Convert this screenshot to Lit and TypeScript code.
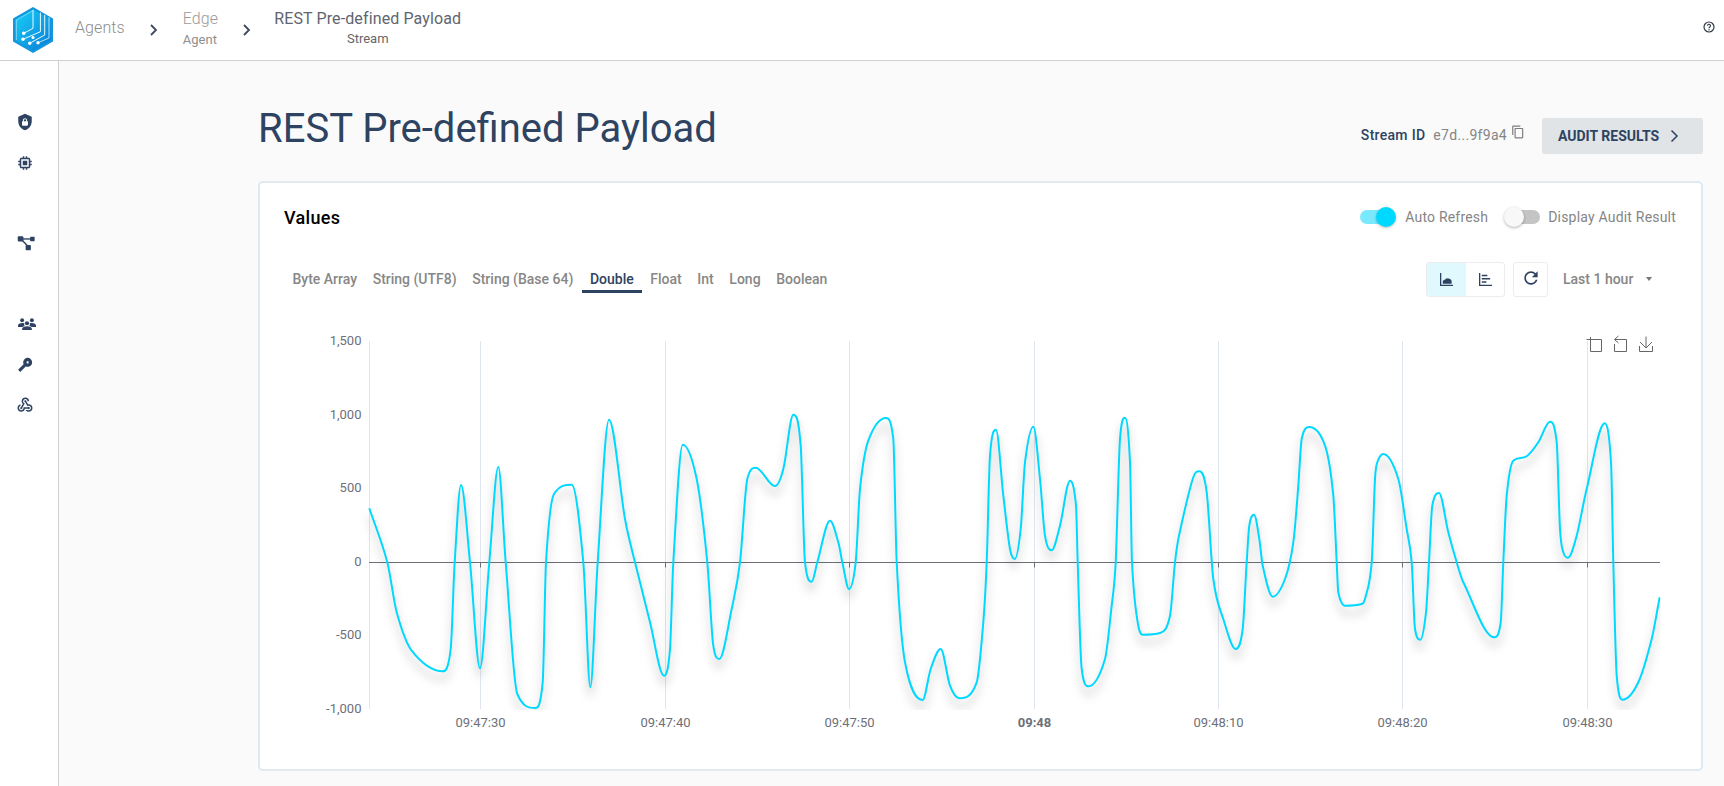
import { LitElement, html, css, svg } from "lit";
import { customElement } from "lit/decorators.js";

type P = [number, number];
const conv = (ox: number, arr: number[][]): P[] => arr.map(([x, y]) => [ox + x / 3, 330 + y / 3] as P);

const POINTS: P[] = [
  ...conv(300, [[208,538],[262,700],[290,850],[335,965],[428,1027],[452,960],[464,700],[483,468],[510,700],[540,1018],[568,700],[595,414],[617,700],[652,1095],[706,1137],[728,1060],[738,700],[762,495],[815,467],[850,700],[871,1074],[893,700],[927,272],[975,570],[1005,700],[1050,880],[1092,1040],[1110,960],[1120,700],[1148,347],[1190,450],[1222,700],[1240,950],[1258,990],[1295,840],[1320,700],[1342,450],[1367,416],[1425,471],[1450,420]]),
  ...conv(780, [[40,257],[62,350],[75,700],[95,758],[112,700],[150,575],[175,640],[187,700],[207,780],[227,700],[240,480],[265,335],[318,267],[340,330],[350,700],[375,1000],[428,1113],[452,1020],[482,960],[510,1070],[538,1108],[590,1060],[610,880],[620,700],[630,380],[648,302],[670,500],[690,660],[704,690],[722,600],[735,400],[760,293],[780,450],[795,620],[815,664],[840,590],[870,455],[888,530],[893,700],[905,1020],[925,1072],[975,990],[995,830],[1007,700],[1020,330],[1035,266],[1050,400],[1056,700],[1075,890],[1090,917],[1140,912],[1170,860],[1185,700],[1197,620],[1240,445],[1258,427],[1280,490],[1300,750],[1330,870],[1367,960],[1388,900]]),
  ...conv(1230, [[50,700],[58,590],[72,557],[88,630],[98,710],[128,803],[165,750],[190,640],[205,470],[215,330],[238,294],[285,350],[310,500],[320,700],[325,790],[345,830],[395,825],[405,810],[425,700],[435,450],[442,400],[460,375],[505,450],[530,600],[545,700],[555,900],[571,932],[588,850],[597,700],[607,530],[627,492],[655,610],[680,700],[700,760],[793,925],[812,880],[820,700],[830,500],[850,395],[890,382],[925,340],[960,278],[980,340],[990,600],[1000,670],[1014,686],[1040,620],[1070,480],[1124,283],[1143,400],[1150,700],[1160,1040],[1178,1112],[1225,1060],[1265,930],[1289,805]]),
];

function smoothPath(pts: P[]): string {
  const n = pts.length;
  const s: number[] = [];
  for (let i = 0; i < n - 1; i++) s.push((pts[i + 1][1] - pts[i][1]) / (pts[i + 1][0] - pts[i][0]));
  const m: number[] = new Array(n).fill(0);
  m[0] = s[0];
  m[n - 1] = s[n - 2];
  for (let i = 1; i < n - 1; i++) {
    if (s[i - 1] * s[i] <= 0) continue;
    const c = (pts[i + 1][1] - pts[i - 1][1]) / (pts[i + 1][0] - pts[i - 1][0]);
    const lim = 3 * Math.min(Math.abs(s[i - 1]), Math.abs(s[i]));
    m[i] = Math.sign(c) * Math.min(Math.abs(c), lim);
  }
  let d = `M${pts[0][0].toFixed(1)} ${pts[0][1].toFixed(1)}`;
  for (let i = 0; i < n - 1; i++) {
    const h = (pts[i + 1][0] - pts[i][0]) / 3;
    d += `C${(pts[i][0] + h).toFixed(1)} ${(pts[i][1] + m[i] * h).toFixed(1)} ${(pts[i + 1][0] - h).toFixed(1)} ${(pts[i + 1][1] - m[i + 1] * h).toFixed(1)} ${pts[i + 1][0].toFixed(1)} ${pts[i + 1][1].toFixed(1)}`;
  }
  return d;
}

const TABS = ["Byte Array", "String (UTF8)", "String (Base 64)", "Double", "Float", "Int", "Long", "Boolean"];
const GRID: [number, string, boolean][] = [
  [480.5, "09:47:30", false], [665.5, "09:47:40", false], [849.5, "09:47:50", false], [1034.5, "09:48", true],
  [1218.5, "09:48:10", false], [1402.5, "09:48:20", false], [1587.5, "09:48:30", false],
];
const YL: [number, string][] = [[341, "1,500"], [414.5, "1,000"], [488, "500"], [561.5, "0"], [635, "-500"], [708.5, "-1,000"]];

@customElement("app-root")
export class AppRoot extends LitElement {
  static styles = css`
    :host { display: block; height: 786px; overflow: hidden; font-family: Roboto, "Liberation Sans", sans-serif; background: #fafafa; color: #2e4361; }
    .top { height: 60px; background: #fff; border-bottom: 1px solid #cfcfcf; display: flex; align-items: center; padding: 0 8px 0 13px; }
    .logo { width: 40px; height: 46px; flex: none; margin-right: 22px; }
    .crumb { font-size: 16px; color: #8d8d8d; font-weight: 300; display: flex; flex-direction: column; align-items: center; line-height: 20px; letter-spacing: .1px; margin-top: -4px; }
    .crumb small { font-size: 13px; line-height: 18px; margin-top: 2px; font-weight: 400; color: #8f8f8f; letter-spacing: 0; }
    .crumb.left { align-items: flex-start; color: #9a9a9a; margin-top: -3px; }
    .crumb.cur { color: #5f6670; font-weight: 400; letter-spacing: .12px; margin-top: -4px; }
    .crumb.cur small { color: #666; margin-top: 1px; }
    .sep { width: 10px; height: 14px; margin: 0 24px 0 24px; flex: none; }
    .sep.b { margin: 0 22px 0 24px; }
    .help { margin-left: auto; width: 12px; height: 12px; margin-right: 1px; margin-top: -6px; }
    .body { display: flex; height: 725px; }
    .side { width: 58px; flex: none; background: #fff; border-right: 1px solid #cfcfcf; display: grid; grid-auto-rows: 40.4px; padding: 41px 0 0 16px; box-sizing: border-box; width: 59px; justify-items: start; align-items: center; align-content: start; }
    .side svg { width: 18px; height: 18px; fill: #2e4361; }
    .side svg.mg { margin-left: 1px; }
    .side svg.grpi { margin-left: 2px; }
    main { flex: 1; padding: 0 21px 0 199px; min-width: 0; }
    .head { height: 120px; display: flex; align-items: center; padding-top: 22px; box-sizing: border-box; }
    h1 { margin: 0; font-size: 40px; font-weight: 400; color: #2e4361; flex: 1; position: relative; top: -4px; }
    .sid { font-size: 14px; font-weight: 500; color: #2e4361; margin-right: 8px; position: relative; top: 3px; letter-spacing: .3px; }
    .val { font-size: 14px; color: #858585; position: relative; top: 3px; letter-spacing: .3px; }
    .copy { width: 14px; height: 14px; fill: #7d7d7d; margin: 0 17px 0 4px; }
    .audit { width: 161px; height: 36px; background: #e0e4e7; border-radius: 3px; display: flex; align-items: center; padding-left: 16px; box-sizing: border-box; gap: 11px; font-size: 14px; font-weight: 700; color: #2e4361; position: relative; top: 4px; }
    .audit svg { width: 9px; height: 14px; }
    .card { height: 590px; background: #fff; border: 2px solid #e1e9f0; border-radius: 5px; box-sizing: border-box; display: flex; flex-direction: column; padding: 0 0 0 24px; }
    .row1 { display: flex; align-items: center; height: 36px; margin-top: 16px; padding-right: 25px; }
    .values { font-size: 18px; font-weight: 500; letter-spacing: .3px; color: #000; flex: 1; position: relative; top: 1px; }
    .tog { display: flex; align-items: center; font-size: 14px; color: #858585; letter-spacing: .2px; }
    .tog + .tog { margin-left: 16px; }
    .track { width: 32px; height: 14px; border-radius: 7px; background: #7ae9fd; position: relative; margin-right: 13px; }
    .thumb { position: absolute; top: -3px; left: 16px; width: 20px; height: 20px; border-radius: 50%; background: #00d9ff; box-shadow: 0 1px 3px rgba(0,0,0,.25); }
    .track.off { background: #c4c4c4; width: 33px; margin-right: 8px; margin-left: 3px; }
    .track.off .thumb { left: -3px; background: #f8f8f8; box-shadow: 0 1px 3px rgba(0,0,0,.3); }
    .row2 { display: flex; align-items: center; height: 36px; margin-top: 27px; }
    .tabs { display: flex; flex: 1; padding-left: .7px; position: relative; top: -2px; }
    .tab { margin: 6px .8px 0; padding: 0 7px; font-size: 14px; font-weight: 500; color: #878787; line-height: 22px; border-bottom: 3px solid transparent; }
    .tab.on { color: #2e4361; border-bottom-color: #2e4361; padding: 0 8px; }
    .grp { display: flex; height: 35px; border: 1px solid #ececec; border-radius: 3px; box-sizing: border-box; width: 79px; overflow: hidden; }
    .grp div { flex: 1; display: flex; align-items: center; justify-content: center; }
    .grp .act { background: #e0f9ff; flex: none; width: 39px; }
    .grp svg { width: 15px; height: 13px; fill: #2e4361; }
    .ref { width: 35px; height: 35px; border: 1px solid #ececec; border-radius: 3px; box-sizing: border-box; display: flex; align-items: center; justify-content: center; margin-left: 8px; }
    .ref svg { width: 20px; height: 20px; fill: #2e4361; margin-top: -2px; }
    .range { width: 153px; padding: 0 0 0 15px; box-sizing: border-box; display: flex; align-items: center; font-size: 14px; font-weight: 500; color: #868686; }
    .caret { width: 0; height: 0; border: 3.5px solid transparent; border-top: 4px solid #777; border-bottom: 0; margin-left: 13px; }
    .chart { display: block; margin-left: -24px; margin-top: 32px; width: 1440px; height: 440px; flex: none; }
    .chart text { font-family: Roboto, "Liberation Sans", sans-serif; font-size: 13px; fill: #6e7079; }
    .chart .bold { font-weight: 700; }
    .line { fill: none; stroke: #00d9ff; stroke-width: 2; filter: drop-shadow(0 8px 5px rgba(0,0,0,.3)); }
    .tool { fill: none; stroke: #666; stroke-width: 1; }
  `;

  render() {
    return html`
      <div class="top">
        <svg class="logo" viewBox="0 0 40 46">
          <defs>
            <linearGradient id="lg" x1="0.1" y1="0.1" x2="0.9" y2="0.9">
              <stop offset="0" stop-color="#17c8f6"/><stop offset="1" stop-color="#0b84d8"/>
            </linearGradient>
          </defs>
          <path d="M20 0L40 11.500V34.500L20 46L0 34.500V11.500Z" fill="#1296dc"/>
          <path d="M20 2.500L37.800 12.800V33.200L20 43.500L2.200 33.200V12.800Z" fill="url(#lg)"/>
          <path d="M20 3.500L3.500 13V33" fill="none" stroke="#dff7ff" stroke-width=".7" opacity=".6"/>
          <g fill="none" stroke="#e8faff" stroke-width="1">
            <path d="M20 3V21.300L10.700 26.300"/><path d="M27.400 5.700V24.700L10 32.300"/><path d="M31.700 8V28L16.700 36.300"/><path d="M36 10.300V31L25 35.700" opacity=".75"/>
          </g>
          <g fill="#fff"><circle cx="10.700" cy="26.300" r="1.700"/><circle cx="10" cy="32.300" r="1.700"/><circle cx="16.700" cy="36.300" r="1.700"/><circle cx="25" cy="35.700" r="1.700"/><circle cx="20" cy="30.500" r="1.500"/></g>
        </svg>
        <div class="crumb">Agents</div>
        <svg class="sep" viewBox="0 0 10 14"><path d="M2 2l5 5-5 5" fill="none" stroke="#3d4a5c" stroke-width="1.800"/></svg>
        <div class="crumb left">Edge<small>Agent</small></div>
        <svg class="sep b" viewBox="0 0 10 14"><path d="M2 2l5 5-5 5" fill="none" stroke="#3d4a5c" stroke-width="1.800"/></svg>
        <div class="crumb cur">REST Pre-defined Payload<small>Stream</small></div>
        <svg class="help" viewBox="0 0 24 24"><circle cx="12" cy="12" r="10" fill="none" stroke="#2e3a48" stroke-width="2.400"/><path d="M9 9.500a3 3 0 1 1 4.600 2.500c-1 .7-1.600 1.200-1.600 2.500" fill="none" stroke="#2e3a48" stroke-width="2.200"/><circle cx="12" cy="17.500" r="1.400" fill="#2e3a48"/></svg>
      </div>
      <div class="body">
        <nav class="side">
          <svg viewBox="0 0 24 24"><path d="M12,1L3,5V11C3,16.55 6.84,21.74 12,23C17.16,21.74 21,16.55 21,11V5L12,1M12,7C13.4,7 14.8,8.1 14.8,9.5V11C15.4,11 16,11.6 16,12.3V15.8C16,16.4 15.4,17 14.7,17H9.2C8.6,17 8,16.4 8,15.7V12.2C8,11.6 8.6,11 9.2,11V9.5C9.2,8.1 10.6,7 12,7M12,8.2C11.2,8.2 10.5,8.7 10.5,9.5V11H13.5V9.5C13.5,8.7 12.8,8.2 12,8.2Z"/></svg>
          <svg viewBox="0 0 24 24"><path d="M15 9H9v6h6V9zm6 2V9h-2V7c0-1.100-.9-2-2-2h-2V3h-2v2h-2V3H9v2H7c-1.100 0-2 .9-2 2v2H3v2h2v2H3v2h2v2c0 1.100.9 2 2 2h2v2h2v-2h2v2h2v-2h2c1.100 0 2-.9 2-2v-2h2v-2h-2v-2h2zm-4 6H7V7h10v10z"/></svg>
          <span></span>
          <svg class="mg" viewBox="0 0 24 24"><rect x="1" y="3" width="7.500" height="7" rx="1.200"/><rect x="17.500" y="3.500" width="6" height="6" rx="1"/><rect x="11.500" y="14.500" width="7" height="7" rx="1.200"/><path d="M6 5.700h13v1.800H6z"/><path d="M5 7.500l1.300-1.300 8.500 9-1.300 1.300z"/></svg>
          <span></span>
          <svg class="grpi" viewBox="0 0 24 24"><circle cx="5.500" cy="7" r="2.600"/><circle cx="18.500" cy="7" r="2.600"/><circle cx="12" cy="11" r="2.800"/><path d="M0 16v-2c0-2 2.400-3.500 5.500-3.500 1 0 1.900.15 2.700.45A4.500 4.500 0 0 0 9 14.600C7.500 15 6.300 15.500 5.800 16zM24 16v-2c0-2-2.400-3.500-5.500-3.500-1 0-1.900.15-2.700.45A4.500 4.500 0 0 1 15 14.600c1.500.4 2.700.9 3.200 1.400zM5.500 20v-1.500c0-2 3-3.500 6.500-3.500s6.500 1.500 6.500 3.500V20z"/></svg>
          <svg viewBox="0 0 24 24"><g transform="rotate(135 12 12)"><path d="M12.650 10C11.830 7.670 9.610 6 7 6c-3.310 0-6 2.690-6 6s2.690 6 6 6c2.610 0 4.830-1.670 5.650-4H23v-4H12.650zM7 13.500c-.8 0-1.500-.7-1.500-1.500s.7-1.500 1.500-1.500 1.500.7 1.500 1.500-.7 1.500-1.500 1.500z"/></g></svg>
          <svg viewBox="0 0 24 24"><path d="M10 15h5.880c.27-.31.67-.5 1.120-.5.83 0 1.500.67 1.500 1.500s-.67 1.500-1.500 1.500c-.44 0-.84-.19-1.120-.5H11.900c-.46 2.280-2.480 4-4.900 4-2.760 0-5-2.240-5-5 0-2.420 1.720-4.440 4-4.900v2.070c-1.160.41-2 1.530-2 2.830 0 1.650 1.350 3 3 3s3-1.350 3-3v-1zm2.500-11c1.650 0 3 1.350 3 3h2c0-2.760-2.240-5-5-5s-5 2.240-5 5c0 1.430.6 2.710 1.550 3.620l-2.350 3.900c-.68.14-1.200.75-1.200 1.480 0 .83.67 1.500 1.500 1.500s1.500-.67 1.500-1.500c0-.16-.02-.31-.07-.45l3.380-5.630C10.490 9.610 9.500 8.420 9.500 7c0-1.650 1.350-3 3-3zm4.500 9c-.64 0-1.230.2-1.720.54l-3.050-5.070C11.530 8.350 11 7.740 11 7c0-.83.67-1.500 1.500-1.500S14 6.170 14 7c0 .15-.02.29-.06.43l2.190 3.650c.28-.05.57-.08.87-.08 2.760 0 5 2.240 5 5s-2.240 5-5 5c-1.850 0-3.470-1.010-4.330-2.500h2.670c.48.32 1.050.5 1.660.5 1.650 0 3-1.350 3-3s-1.350-3-3-3z"/></svg>
        </nav>
        <main>
          <div class="head">
            <h1>REST Pre-defined Payload</h1>
            <span class="sid">Stream ID</span>
            <span class="val">e7d...9f9a4</span>
            <svg class="copy" viewBox="0 0 24 24"><path d="M16 1H4c-1.100 0-2 .9-2 2v14h2V3h12V1zm3 4H8c-1.100 0-2 .9-2 2v14c0 1.100.9 2 2 2h11c1.100 0 2-.9 2-2V7c0-1.100-.9-2-2-2zm0 16H8V7h11v14z"/></svg>
            <div class="audit">AUDIT RESULTS <svg viewBox="0 0 9 14"><path d="M1.500 1.500l5.500 5.500-5.500 5.500" fill="none" stroke="#2e4361" stroke-width="1.500"/></svg></div>
          </div>
          <section class="card">
            <div class="row1">
              <div class="values">Values</div>
              <div class="tog"><div class="track"><div class="thumb"></div></div>Auto Refresh</div>
              <div class="tog"><div class="track off"><div class="thumb"></div></div>Display Audit Result</div>
            </div>
            <div class="row2">
              <div class="tabs">${TABS.map((t) => html`<div class="tab ${t === "Double" ? "on" : ""}">${t}</div>`)}</div>
              <div class="grp">
                <div class="act"><svg viewBox="0 0 16 14"><path d="M1 0h1.400v12.600H15V14H1z"/><path d="M4 11.500V8.500c1-1 2-2 2.800-1.500.6-1.200 1.700-1.600 2.600-.8.8-.5 2-.3 2.600.6.8.2 1.500 1 1.500 1.900v2.800z"/></svg></div>
                <div><svg viewBox="0 0 16 14"><path d="M1 0h1.400v12.600H15V14H1z"/><path d="M4 2h6v1.600H4zM4 5.500h9v1.600H4zM4 9h5v1.600H4z"/></svg></div>
              </div>
              <div class="ref"><svg viewBox="0 0 24 24"><path d="M17.650 6.350C16.200 4.900 14.210 4 12 4c-4.420 0-7.990 3.580-7.990 8s3.570 8 7.990 8c3.730 0 6.840-2.550 7.730-6h-2.080c-.82 2.330-3.040 4-5.650 4-3.310 0-6-2.690-6-6s2.690-6 6-6c1.660 0 3.140.69 4.220 1.780L13 11h7V4l-2.350 2.350z"/></svg></div>
              <div class="range">Last 1 hour<span class="caret"></span></div>
            </div>
            <svg class="chart" viewBox="260 330 1440 440">
              <defs><clipPath id="cp"><rect x="360" y="335" width="1300.500" height="376"/></clipPath></defs>
              <path d="M369.500 342V710" stroke="#e0e6f1" fill="none"/>
              ${GRID.map(([x]) => svg`<path d="M${x} 342V710" stroke="#e0e6f1" fill="none"/><path d="M${x} 563.500v5" stroke="#6e7079" fill="none"/>`)}
              <path d="M369 563.500H1660" stroke="#6e7079" fill="none"/>
              ${YL.map(([y, t]) => svg`<text x="361.500" y=${y + 5} text-anchor="end">${t}</text>`)}
              ${GRID.map(([x, t, b]) => svg`<text x=${x} y="728" text-anchor="middle" class=${b ? "bold" : ""}>${t}</text>`)}
              <g clip-path="url(#cp)"><path class="line" d=${smoothPath(POINTS)}/></g>
              <g class="tool">
                <path d="M1586.500 340.500H1601.500V352.500H1590.500V338"/>
                <path d="M1618.500 337L1614.500 340.500L1618.500 344M1614.500 340.500H1626.500V352.500H1614.500V345"/>
                <path d="M1646 337.500V349M1640 343L1646 349L1652 343M1639.500 347V352.500H1652.500V347"/>
              </g>
            </svg>
          </section>
        </main>
      </div>
    `;
  }
}
